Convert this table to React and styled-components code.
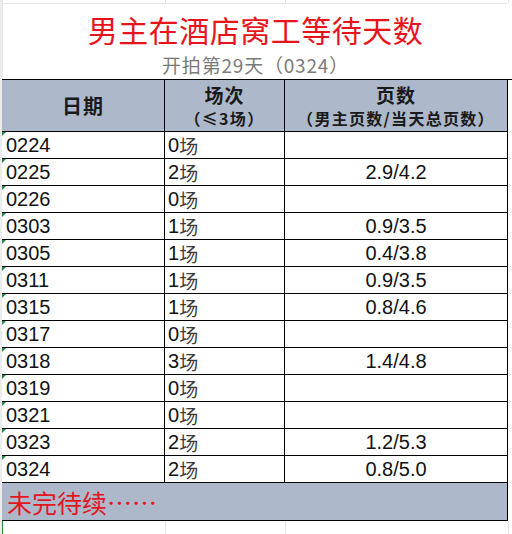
import React from "react";
import styled, { createGlobalStyle } from "styled-components";

const Global = createGlobalStyle`
  html, body { margin: 0; padding: 0; background: #fff; }
  #root { width: 512px; }
`;

const CJK = `"Noto Sans CJK SC", "Noto Sans", sans-serif`;
const NUM = `"Liberation Sans", "Noto Sans CJK SC", sans-serif`;
const HEAD_BG = "#adb9cb";

const Sheet = styled.div`
  width: 512px;
  height: 534px;
  overflow: hidden;
  display: flex;
  flex-direction: column;
  background: #fff;
  box-shadow: inset 2px 0 0 #ececec;
`;

const GridStrip = styled.div`
  height: ${(p) => p.$h}px;
  margin-left: 2px;
  display: grid;
  grid-template-columns: 163px 120px 223px;
  border-left: 1px solid ${(p) => p.$edge || "#e6e6e6"};
  box-sizing: border-box;
  & > div { border-right: 1px solid #e4e4e4; }
`;

const TitleBlock = styled.div`
  height: 76px;
  margin-left: 2px;
  width: 506px;
  box-sizing: border-box;
  border-top: 1px solid #e6e6e6;
  border-left: 1px solid #e6e6e6;
  display: flex;
  flex-direction: column;
  align-items: center;
`;

const Title = styled.div`
  margin-top: 6px;
  font-family: ${CJK};
  font-size: 30px;
  line-height: 38px;
  color: #e8141c;
  letter-spacing: 0.5px;
`;

const Subtitle = styled.div`
  margin-top: 3px;
  font-family: ${CJK};
  font-size: 19px;
  line-height: 28px;
  color: #7a7a7a;
  letter-spacing: 0.8px;
`;

const Table = styled.div`
  margin-left: 2px;
  display: grid;
  grid-template-columns: 163px 120px 223px;
  border-top: 1px solid #000;
`;

const HeadCell = styled.div`
  height: 52px;
  box-sizing: border-box;
  background: ${HEAD_BG};
  border-right: 1px solid #000;
  border-bottom: 1px solid #000;
  display: flex;
  flex-direction: column;
  align-items: center;
  justify-content: center;
  font-family: ${CJK};
  font-weight: 700;
  color: #1a1a1a;
`;

const HeadMain = styled.div`
  font-size: ${(p) => p.$size || 19}px;
  line-height: ${(p) => p.$lh || 24}px;
  letter-spacing: 1px;
`;

const HeadSub = styled.div`
  font-size: 16px;
  line-height: 22px;
  letter-spacing: 1.3px;
`;

const Cell = styled.div`
  position: relative;
  height: 27px;
  box-sizing: border-box;
  border-right: 1px solid #000;
  border-bottom: 1px solid #000;
  display: flex;
  align-items: center;
  justify-content: ${(p) => (p.$center ? "center" : "flex-start")};
  padding-left: ${(p) => (p.$center ? 0 : p.$pad || 4)}px;
  font-family: ${NUM};
  font-size: 20px;
  color: #111;
  ${(p) =>
    p.$flag &&
    `&::before {
      content: "";
      position: absolute;
      left: 0;
      top: 0;
      border-top: 4px solid #1f8a3b;
      border-right: 4px solid transparent;
    }`}
`;

const Unit = styled.span`
  font-family: ${CJK};
  font-size: 19px;
  color: #3a3a3a;
`;

const Footer = styled.div`
  grid-column: 1 / -1;
  height: 38px;
  box-sizing: border-box;
  background: ${HEAD_BG};
  border-right: 1px solid #000;
  border-bottom: 1px solid #000;
  display: flex;
  align-items: center;
  padding-left: 5px;
  font-family: ${CJK};
  font-size: 25px;
  color: #e3151d;
`;

const rows = [
  ["0224", "0", ""],
  ["0225", "2", "2.9/4.2"],
  ["0226", "0", ""],
  ["0303", "1", "0.9/3.5"],
  ["0305", "1", "0.4/3.8"],
  ["0311", "1", "0.9/3.5"],
  ["0315", "1", "0.8/4.6"],
  ["0317", "0", ""],
  ["0318", "3", "1.4/4.8"],
  ["0319", "0", ""],
  ["0321", "0", ""],
  ["0323", "2", "1.2/5.3"],
  ["0324", "2", "0.8/5.0"],
];

export default function App() {
  return (
    <>
      <Global />
      <Sheet>
        <GridStrip $h={3}>
          <div />
          <div />
          <div />
        </GridStrip>
        <TitleBlock>
          <Title>男主在酒店窝工等待天数</Title>
          <Subtitle>开拍第29天（0324）</Subtitle>
        </TitleBlock>
        <Table>
          <HeadCell>
            <HeadMain $size={20}>日期</HeadMain>
          </HeadCell>
          <HeadCell>
            <HeadMain>场次</HeadMain>
            <HeadSub>（≤3场）</HeadSub>
          </HeadCell>
          <HeadCell>
            <HeadMain>页数</HeadMain>
            <HeadSub>（男主页数/当天总页数）</HeadSub>
          </HeadCell>
          {rows.map(([d, n, p]) => (
            <React.Fragment key={d}>
              <Cell $flag>{d}</Cell>
              <Cell $pad={3}>
                {n}
                <Unit>场</Unit>
              </Cell>
              <Cell $center>{p}</Cell>
            </React.Fragment>
          ))}
          <Footer>未完待续……</Footer>
        </Table>
        <GridStrip $h={13} $edge="#1f8a3b">
          <div />
          <div />
          <div />
        </GridStrip>
      </Sheet>
    </>
  );
}
